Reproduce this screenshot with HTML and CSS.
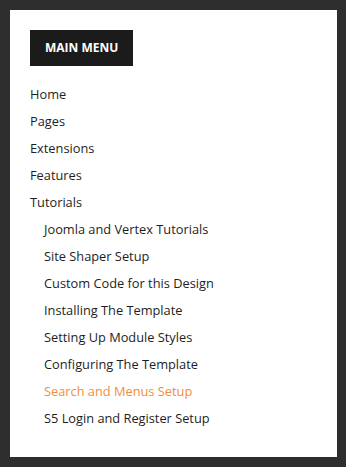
FILE: index.html
```html
<!DOCTYPE html>
<html>
<head>
<meta charset="utf-8">
<link rel="stylesheet" href="styles.css">
</head>
<body>
<div class="panel">
  <h3 class="title">MAIN MENU</h3>
  <ul class="menu">
    <li><a href="#">Home</a></li>
    <li><a href="#">Pages</a></li>
    <li><a href="#">Extensions</a></li>
    <li><a href="#">Features</a></li>
    <li><a href="#">Tutorials</a>
      <ul class="sub">
        <li><a href="#">Joomla and Vertex Tutorials</a></li>
        <li><a href="#">Site Shaper Setup</a></li>
        <li><a href="#">Custom Code for this Design</a></li>
        <li><a href="#">Installing The Template</a></li>
        <li><a href="#">Setting Up Module Styles</a></li>
        <li><a href="#">Configuring The Template</a></li>
        <li><a href="#" class="active">Search and Menus Setup</a></li>
        <li><a href="#">S5 Login and Register Setup</a></li>
      </ul>
    </li>
  </ul>
</div>
</body>
</html>
```
FILE: styles.css
```css
html, body { margin: 0; padding: 0; }
body {
  background: #2e2e2e;
  padding: 10px 9px 10px 10px;
  font-family: "Open Sans", "Liberation Sans", sans-serif;
}
.panel {
  background: #fff;
  padding: 20px 20px 25px 20px;
  height: 402px;
}
.title {
  display: inline-block;
  margin: 0;
  background: #1b1b1b;
  color: #fff;
  font-family: "Open Sans", sans-serif;
  font-weight: 700;
  font-size: 12px;
  height: 36px;
  line-height: 36px;
  padding: 0 15px;
}
.menu {
  list-style: none;
  margin: 15px 0 0 0;
  padding: 0;
}
.menu li a {
  display: block;
  height: 27px;
  line-height: 27px;
  font-size: 12.8px;
  color: #1e1e1e;
  text-decoration: none;
}
.sub {
  list-style: none;
  margin: 0;
  padding: 0 0 0 14px;
}
.menu li a.active { color: #f28c3c; }
```
